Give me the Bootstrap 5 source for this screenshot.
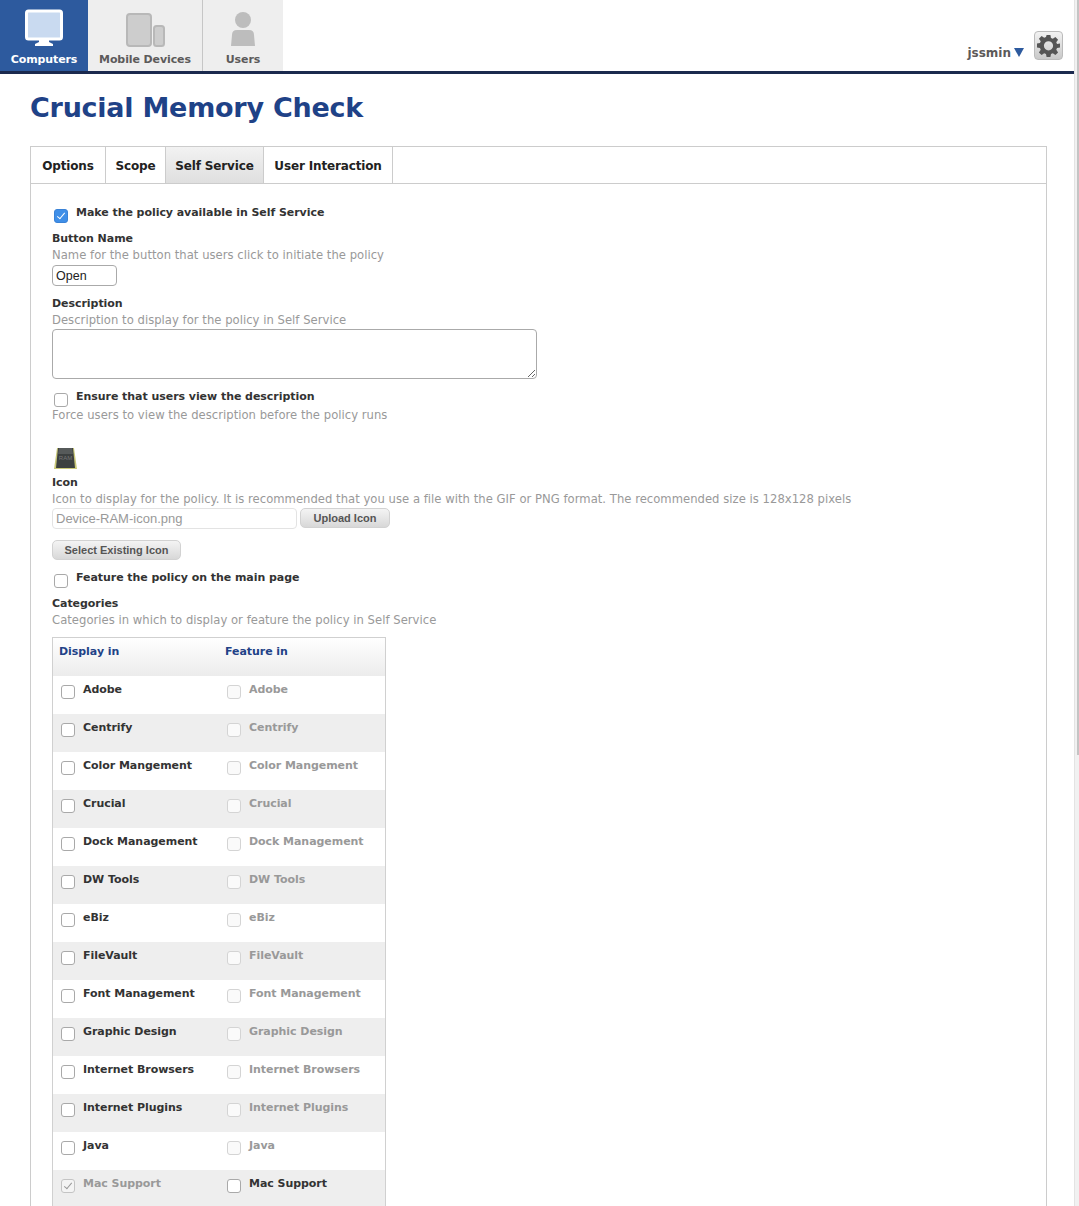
<!DOCTYPE html>
<html lang="en">
<head>
<meta charset="utf-8">
<title>Crucial Memory Check</title>
<link href="https://cdn.jsdelivr.net/npm/bootstrap@5.3.0/dist/css/bootstrap.min.css" rel="stylesheet">
<style>
html,body{height:1206px;overflow:hidden;background:#fff}
body{font-family:"DejaVu Sans","Liberation Sans",sans-serif;font-size:11px;line-height:16px;color:#333}
.shell{display:flex;height:1206px}
.pagecol{width:1074px;flex:none;overflow:hidden}
.scrolltrack{flex:1;background:#f1f1f1;border-left:1px solid #e3e3e3;display:flex;justify-content:flex-end}
.scrollthumb{width:2px;height:755px;background:#c4c4c4}
.topbar{height:74px;border-bottom:3px solid #1b2a4e}
.toptab{display:flex;flex-direction:column;align-items:center;height:71px;background:#eeeeee;color:#5c5a5a;font-weight:700;font-size:11px;letter-spacing:-.1px;text-decoration:none}
.toptab svg{display:block;margin-top:9px;height:39px}
.toptab span{margin-top:4px;line-height:16px}
.tt-comp{width:88px;background:#2d5a9e;color:#fff}
.tt-mob{width:115px;border-right:1px solid #c6c6c6}
.tt-user{width:80px}
.usr{font-weight:700;color:#5c5a5a;font-size:12px;margin-right:10px;margin-bottom:10px}
.usr i{display:inline-block;width:0;height:0;border-left:5px solid transparent;border-right:5px solid transparent;border-top:9px solid #2d5a9e;margin-left:3px}
.gearbtn{width:29px;height:29px;border:1px solid #bbb;border-radius:4px;background:linear-gradient(#f2f2f2,#c9c9c9);margin-right:11px;margin-bottom:11px;display:flex;align-items:center;justify-content:center}
.ptitle{font-family:"DejaVu Sans",sans-serif;font-size:27px;font-weight:700;line-height:36px;color:#1f4287;margin:16px 0 20px 30px;letter-spacing:-.25px}
.panel{margin-left:30px;width:1017px;height:1100px;border:1px solid #cccccc}
.tabrow{height:37px;border-bottom:1px solid #cccccc}
.ptab{display:flex;align-items:center;justify-content:center;height:36px;padding-top:1px;border-right:1px solid #cccccc;font-weight:700;font-size:12px;color:#222;text-decoration:none;letter-spacing:-.15px}
.ptab.on{background:linear-gradient(#f2f2f2,#dfdfdf)}
.w1{width:75px}.w2{width:60px}.w3{width:98px}.w4{width:129px}
.pbody{padding:21px 0 0 21px}
.chk{appearance:none;-webkit-appearance:none;width:14px;height:14px;margin:0;border:1px solid #a9a9a9;border-radius:3px;background:#fff;flex:none;position:relative;display:block}
.chk:checked{background:#fff}
.chk.blue:checked{background:#3f8fe8;border-color:#3a82d6}
.chk:checked::after{content:"";position:absolute;left:4px;top:1px;width:4px;height:8px;border:solid #fff;border-width:0 1.5px 1.5px 0;transform:rotate(40deg)}
.chk:disabled{border-color:#d4d4d4;background:#fafafa}
.chk:disabled:checked{background:#f4f4f4;border-color:#c4c4c4}
.chk:disabled:checked::after{border-color:#999}
.ckrow{display:flex;gap:8px;margin-left:2px}
.ckrow .chk{margin-top:4px}
.lab{font-weight:700;color:#333;letter-spacing:-.05px}
.hint{color:#999;font-size:11.6px;letter-spacing:.03px;white-space:nowrap}
.tinput{display:block;width:65px;height:21px;border:1px solid #aaa;border-radius:4px;font:12.5px/19px "Liberation Sans",sans-serif;color:#222;padding:0 3px;margin-top:2px}
.tarea{display:block;width:485px;height:50px;border:1px solid #aaa;border-radius:4px;margin-top:1px;resize:both}
.ramicon{display:block;margin-top:24px;margin-left:1px}
.fileinput{width:245px;height:21px;border:1px solid #e3e3e3;border-radius:4px;font:13px/19px "Liberation Sans",sans-serif;color:#999;padding:0 3px;background:#fff}
.gbtn{display:block;height:20px;border:1px solid #d2d2d2;border-radius:5px;background:linear-gradient(#f4f4f4,#d8d8d8);font:700 11px/18px "Liberation Sans",sans-serif;color:#555;padding:0;text-align:center}
.catbox{width:334px;margin-top:9px;border:1px solid #d0d0d0;border-bottom:0}
.cathead{height:38px;background:linear-gradient(#fff,#ececec);display:flex;font-weight:700;color:#1f4287;letter-spacing:-.05px;padding-top:6px}
.cathead div{width:166px;padding-left:6px}
.catrow{display:flex;height:38px;padding-top:6px;font-weight:700;letter-spacing:-.05px;color:#333}
.catrow:nth-child(odd){background:#eeeeee}
.catcell{width:166px;display:flex;gap:8px;padding-left:8px}
.catcell .chk{margin-top:3px}
.catcell.off{color:#999}
.fieldgap1{margin-top:10px}
.fieldgap2{margin-top:10px}
.fieldgap5{margin-top:5px}
.iconrow{margin-top:1px}
.w-upload{width:90px;margin-left:-1px}
.w-select{width:129px;margin-top:11px}
.fieldgap3{margin-top:10px}
.fieldgap4{margin-top:8px}
.namegap{margin-top:8px}
</style>
</head>
<body>
<div class="shell">
<div class="pagecol">
  <header class="topbar d-flex">
    <a class="toptab tt-comp" href="#">
      <svg width="40" height="39" viewBox="0 0 40 39"><rect x="2.500" y="2" width="35" height="28" rx="2" fill="#c9daf0" stroke="#fff" stroke-width="3"/><path d="M15 31h10v2l4 2v2H11v-2l4-2z" fill="#fff"/></svg>
      <span>Computers</span>
    </a>
    <a class="toptab tt-mob" href="#">
      <svg width="40" height="39" viewBox="0 0 40 39"><rect x="2" y="5" width="24" height="32" rx="3" fill="#cdcdcd" stroke="#b8b8b8" stroke-width="2"/><rect x="29" y="17" width="10" height="20" rx="2.500" fill="#cdcdcd" stroke="#b8b8b8" stroke-width="2"/></svg>
      <span>Mobile Devices</span>
    </a>
    <a class="toptab tt-user" href="#">
      <svg width="26" height="39" viewBox="0 0 26 39"><circle cx="13" cy="11" r="8" fill="#bdbdbd"/><path d="M1 37 L2 26 Q2 21 7 21 H19 Q24 21 24 26 L25 37 Z" fill="#bdbdbd"/></svg>
      <span>Users</span>
    </a>
    <div class="ms-auto d-flex align-items-end">
      <span class="usr">jssmin<i></i></span>
      <div class="gearbtn">
        <svg width="23" height="23" viewBox="0 0 24 24"><path fill="#555" fill-rule="evenodd" d="M10 1h4l.6 3.200 1.900.8 2.700-1.900 2.800 2.800-1.900 2.700.8 1.900L24 10v4l-3.100.6-.8 1.900 1.900 2.700-2.800 2.800-2.700-1.900-1.900.8L14 24h-4l-.6-3.100-1.900-.8-2.700 1.900L2 19.200l1.900-2.700-.8-1.900L0 14v-4l3.100-.6.8-1.900L2 4.900l2.800-2.800 2.700 1.900 1.900-.8zM12 7.500a4.800 4.800 0 1 0 0 9.600 4.800 4.800 0 0 0 0-9.600z"/></svg>
      </div>
    </div>
  </header>

  <h1 class="ptitle">Crucial Memory Check</h1>

  <section class="panel">
    <nav class="tabrow d-flex">
      <a class="ptab w1" href="#">Options</a>
      <a class="ptab w2" href="#">Scope</a>
      <a class="ptab w3 on" href="#">Self Service</a>
      <a class="ptab w4" href="#">User Interaction</a>
    </nav>
    <div class="pbody">
      <div class="ckrow"><input class="chk blue" type="checkbox" checked><span class="lab">Make the policy available in Self Service</span></div>
      <div class="lab namegap">Button Name</div>
      <div class="hint">Name for the button that users click to initiate the policy</div>
      <input class="tinput" type="text" value="Open">
      <div class="lab fieldgap1">Description</div>
      <div class="hint">Description to display for the policy in Self Service</div>
      <textarea class="tarea"></textarea>
      <div class="ckrow fieldgap2"><input class="chk" type="checkbox"><span class="lab">Ensure that users view the description</span></div>
      <div class="hint">Force users to view the description before the policy runs</div>
      <svg class="ramicon" width="25" height="23" viewBox="0 0 25 23"><path d="M4 1h17l3 21H1z" fill="#c9c878"/><path d="M5 1h15l2 20H3z" fill="#3c4040"/><path d="M6 1h13l1 6H5z" fill="#565a5a"/><text x="12.500" y="13" text-anchor="middle" font-size="6" font-family="Liberation Sans" fill="#777">RAM</text></svg>
      <div class="lab fieldgap5">Icon</div>
      <div class="hint">Icon to display for the policy. It is recommended that you use a file with the GIF or PNG format. The recommended size is 128x128 pixels</div>
      <div class="d-flex gap-1 iconrow">
        <input class="fileinput" type="text" value="Device-RAM-icon.png" readonly>
        <button class="gbtn w-upload" type="button">Upload Icon</button>
      </div>
      <button class="gbtn w-select" type="button">Select Existing Icon</button>
      <div class="ckrow fieldgap3"><input class="chk" type="checkbox"><span class="lab">Feature the policy on the main page</span></div>
      <div class="lab fieldgap4">Categories</div>
      <div class="hint">Categories in which to display or feature the policy in Self Service</div>
      <div class="catbox" id="cats">
        <div class="cathead"><div>Display in</div><div>Feature in</div></div>
        <div class="catrow"><div class="catcell"><input class="chk" type="checkbox">Adobe</div><div class="catcell off"><input class="chk" type="checkbox" disabled>Adobe</div></div>
        <div class="catrow"><div class="catcell"><input class="chk" type="checkbox">Centrify</div><div class="catcell off"><input class="chk" type="checkbox" disabled>Centrify</div></div>
        <div class="catrow"><div class="catcell"><input class="chk" type="checkbox">Color Mangement</div><div class="catcell off"><input class="chk" type="checkbox" disabled>Color Mangement</div></div>
        <div class="catrow"><div class="catcell"><input class="chk" type="checkbox">Crucial</div><div class="catcell off"><input class="chk" type="checkbox" disabled>Crucial</div></div>
        <div class="catrow"><div class="catcell"><input class="chk" type="checkbox">Dock Management</div><div class="catcell off"><input class="chk" type="checkbox" disabled>Dock Management</div></div>
        <div class="catrow"><div class="catcell"><input class="chk" type="checkbox">DW Tools</div><div class="catcell off"><input class="chk" type="checkbox" disabled>DW Tools</div></div>
        <div class="catrow"><div class="catcell"><input class="chk" type="checkbox">eBiz</div><div class="catcell off"><input class="chk" type="checkbox" disabled>eBiz</div></div>
        <div class="catrow"><div class="catcell"><input class="chk" type="checkbox">FileVault</div><div class="catcell off"><input class="chk" type="checkbox" disabled>FileVault</div></div>
        <div class="catrow"><div class="catcell"><input class="chk" type="checkbox">Font Management</div><div class="catcell off"><input class="chk" type="checkbox" disabled>Font Management</div></div>
        <div class="catrow"><div class="catcell"><input class="chk" type="checkbox">Graphic Design</div><div class="catcell off"><input class="chk" type="checkbox" disabled>Graphic Design</div></div>
        <div class="catrow"><div class="catcell"><input class="chk" type="checkbox">Internet Browsers</div><div class="catcell off"><input class="chk" type="checkbox" disabled>Internet Browsers</div></div>
        <div class="catrow"><div class="catcell"><input class="chk" type="checkbox">Internet Plugins</div><div class="catcell off"><input class="chk" type="checkbox" disabled>Internet Plugins</div></div>
        <div class="catrow"><div class="catcell"><input class="chk" type="checkbox">Java</div><div class="catcell off"><input class="chk" type="checkbox" disabled>Java</div></div>
        <div class="catrow"><div class="catcell off"><input class="chk" type="checkbox" checked disabled>Mac Support</div><div class="catcell"><input class="chk" type="checkbox">Mac Support</div></div>
      </div>
    </div>
  </section>
</div>
<div class="scrolltrack"><div class="scrollthumb"></div></div>
</div>
<script src="https://cdn.jsdelivr.net/npm/bootstrap@5.3.0/dist/js/bootstrap.bundle.min.js"></script>
</body>
</html>
